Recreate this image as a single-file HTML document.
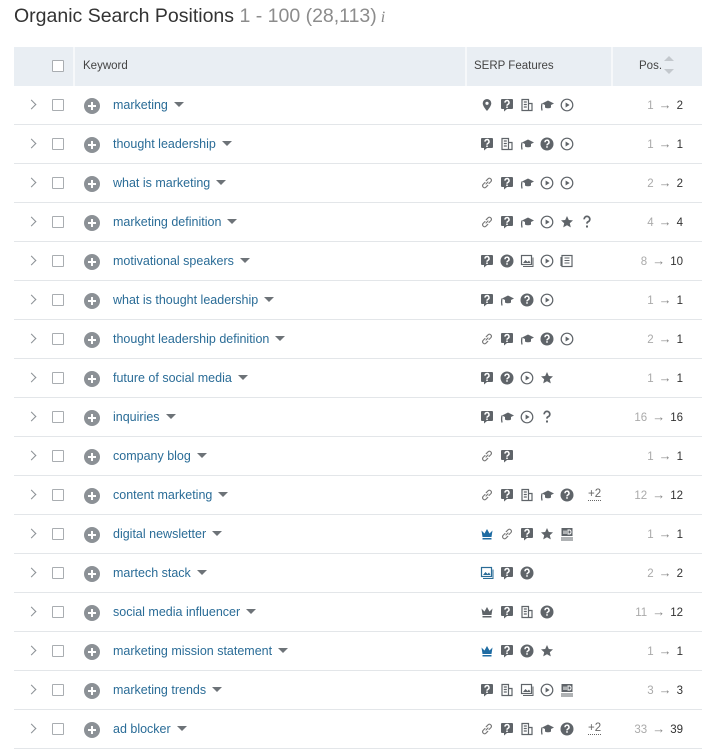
<!DOCTYPE html>
<html><head><meta charset="utf-8">
<style>
*{margin:0;padding:0;box-sizing:border-box}
body{width:702px;height:748px;overflow:hidden;background:#fff;font-family:"Liberation Sans",sans-serif;position:relative}
.title{position:absolute;left:14px;top:5px;font-size:19.5px;color:#333;white-space:nowrap}
.title .g{color:#8c8c8c}
.title .i{font-family:"Liberation Serif",serif;font-style:italic;font-size:16px;color:#888;margin-left:4px}
.hdr{position:absolute;left:14px;top:47px;width:688px;height:39px;background:#e9eef3;font-size:11.5px;color:#444}
.hdr .d{position:absolute;top:0;width:2px;height:39px;background:#f6f8fa}
.cb{position:absolute;width:12px;height:12px;border:1px solid #a9adb1;background:#fff;border-radius:1px}
.row{position:absolute;left:14px;width:688px;height:39px;border-bottom:1px solid #e3e6e9}
.chev{position:absolute;left:14px;top:15px;width:7px;height:7px;border-right:1.5px solid #8b9095;border-top:1.5px solid #8b9095;transform:rotate(45deg)}
.plus{position:absolute;left:70px;top:12px;width:16px;height:16px;border-radius:50%;background:#8c9196}
.plus:before,.plus:after{content:"";position:absolute;background:#fff;left:7px;top:4px;width:2px;height:8px}
.plus:after{left:4px;top:7px;width:8px;height:2px}
.kw{position:absolute;left:99px;top:12px;font-size:12.5px;color:#2a6c97;white-space:nowrap}
.kw:after{content:"";display:inline-block;margin-left:6px;border-left:5px solid transparent;border-right:5px solid transparent;border-top:5px solid #6d7378;vertical-align:2px}
.ic{position:absolute;top:12px;left:466px;height:14px;white-space:nowrap}
.ic svg{width:14px;height:14px;margin-right:6px;vertical-align:top}
.ic .more{font-size:11.5px;color:#666;border-bottom:1px dotted #666;margin-left:8px;vertical-align:top;line-height:13px}
.pos{position:absolute;right:19px;top:13px;font-size:11.5px;color:#333;white-space:nowrap}
.pos .o{color:#aaa}
.pos .a{color:#888;margin:0 5px;font-size:13px;line-height:11px}
</style></head><body>
<svg width="0" height="0" style="position:absolute">
<defs>
<symbol id="q" viewBox="0 0 14 14"><path d="M2 1h10a1 1 0 0 1 1 1v8a1 1 0 0 1-1 1H7l-3 2.5V11H2a1 1 0 0 1-1-1V2a1 1 0 0 1 1-1z" fill="#5f6469"/><path d="M5 4.6a2 2 0 1 1 2.8 1.8c-.7.3-.8.7-.8 1.4" stroke="#fff" stroke-width="1.5" fill="none"/><rect x="6.2" y="8.5" width="1.6" height="1.5" fill="#fff"/></symbol>
<symbol id="qc" viewBox="0 0 14 14"><circle cx="7" cy="7" r="6.5" fill="#5f6469"/><path d="M5 5.2a2 2 0 1 1 2.8 1.8c-.7.3-.8.7-.8 1.4" stroke="#fff" stroke-width="1.5" fill="none"/><rect x="6.2" y="9.2" width="1.6" height="1.5" fill="#fff"/></symbol>
<symbol id="pin" viewBox="0 0 14 14"><path d="M7 1a4.3 4.3 0 0 1 4.3 4.3C11.3 8.5 7 13 7 13S2.7 8.5 2.7 5.3A4.3 4.3 0 0 1 7 1z" fill="#5f6469"/><circle cx="7" cy="5.3" r="1.6" fill="#fff"/></symbol>
<symbol id="doc" viewBox="0 0 14 14"><path d="M2 1.5h6.5v11H2zM8.5 5.5h3.5v7H8.5M3.8 4h3M3.8 6.5h3M3.8 9h3" stroke="#5f6469" stroke-width="1.2" fill="none"/></symbol>
<symbol id="cap" viewBox="0 0 14 14"><path d="M2 5.5l6-3 6 3-6 3z" fill="#5f6469"/><path d="M5 7v2.5c1.5 1 4.5 1 6 0V7" fill="#5f6469"/><path d="M2 5.5c-.5 2-.5 4.5 0 7" stroke="#5f6469" stroke-width="1.3" fill="none"/></symbol>
<symbol id="play" viewBox="0 0 14 14"><circle cx="7" cy="7" r="5.8" stroke="#5f6469" stroke-width="1.2" fill="none"/><path d="M5.6 4.5v5l4-2.5z" fill="#5f6469"/></symbol>
<symbol id="link" viewBox="0 0 14 14"><path d="M6 8l2-2M5 6.5L3 8.5a2 2 0 0 0 2.8 2.8L7.8 9.3M9 7.5l2-2A2 2 0 0 0 8.2 2.7L6.2 4.7" stroke="#777" stroke-width="1.1" fill="none" stroke-linecap="round"/></symbol>
<symbol id="star" viewBox="0 0 14 14"><path d="M7 1l1.8 4 4.2.4-3.2 2.8 1 4.2L7 10.2 3.2 12.4l1-4.2L1 5.4 5.2 5z" fill="#5f6469"/></symbol>
<symbol id="qm" viewBox="0 0 14 14"><path d="M4.2 4.3a2.8 2.8 0 1 1 3.8 2.5c-.8.4-1 .9-1 1.8" stroke="#5f6469" stroke-width="1.8" fill="none"/><rect x="6" y="10.5" width="2" height="2" fill="#5f6469"/></symbol>
<symbol id="img" viewBox="0 0 14 14"><rect x="1.5" y="1.5" width="10" height="9" stroke="#5f6469" stroke-width="1.2" fill="none"/><path d="M3 9l2.5-3 2 2 1.5-1.5L10.5 9z" fill="#5f6469"/><path d="M3 12.5h10V3.5" stroke="#5f6469" stroke-width="1" fill="none"/></symbol>
<symbol id="imgb" viewBox="0 0 14 14"><rect x="1.5" y="1.5" width="10" height="9" stroke="#2a6c97" stroke-width="1.2" fill="none"/><path d="M3 9l2.5-3 2 2 1.5-1.5L10.5 9z" fill="#2a6c97"/><path d="M3 12.5h10V3.5" stroke="#2a6c97" stroke-width="1" fill="none"/></symbol>
<symbol id="news" viewBox="0 0 14 14"><rect x="2" y="1.5" width="10" height="11" stroke="#5f6469" stroke-width="1.2" fill="none"/><path d="M4.5 4h5M4.5 6.5h5M4.5 9h5M1 3v9" stroke="#5f6469" stroke-width="1.1"/></symbol>
<symbol id="crown" viewBox="0 0 14 14"><path d="M1.5 3.5l3 3L7 2l2.5 4.5 3-3-1 6.5h-9z" fill="currentColor"/><rect x="2.5" y="11" width="9" height="1.5" fill="currentColor"/></symbol>
<symbol id="ad" viewBox="0 0 14 14"><rect x="1.5" y="1" width="11" height="8" fill="#5f6469"/><path d="M4 7V3.5M6 7V3.5M8 3h1.5c1 0 1.5.5 1.5 2s-.5 2-1.5 2H8z" stroke="#fff" stroke-width="1" fill="none"/><path d="M1 11h12M1 13h12" stroke="#5f6469" stroke-width="1"/></symbol>
</defs></svg>

<div class="title">Organic Search Positions <span class="g">1 - 100 (28,113)</span><span class="i">i</span></div>

<div class="hdr">
  <div class="cb" style="left:38px;top:13px"></div>
  <div class="d" style="left:59px"></div>
  <div style="position:absolute;left:69px;top:13px">Keyword</div>
  <div class="d" style="left:451px"></div>
  <div style="position:absolute;left:460px;top:13px">SERP Features</div>
  <div class="d" style="left:597px"></div>
  <div style="position:absolute;left:625px;top:13px">Pos.</div>
  <div style="position:absolute;left:650px;top:9px;border-left:5px solid transparent;border-right:5px solid transparent;border-bottom:5px solid #c3c8cd"></div>
  <div style="position:absolute;left:650px;top:22px;border-left:5px solid transparent;border-right:5px solid transparent;border-top:5px solid #c3c8cd"></div>
</div>

<div class="row" style="top:86px"><div class="chev"></div><div class="cb" style="left:38px;top:13px"></div><div class="plus"></div><div class="kw">marketing</div>
<div class="ic"><svg><use href="#pin"/></svg><svg><use href="#q"/></svg><svg><use href="#doc"/></svg><svg><use href="#cap"/></svg><svg><use href="#play"/></svg></div>
<div class="pos"><span class="o">1</span><span class="a">→</span>2</div></div>

<div class="row" style="top:125px"><div class="chev"></div><div class="cb" style="left:38px;top:13px"></div><div class="plus"></div><div class="kw">thought leadership</div>
<div class="ic"><svg><use href="#q"/></svg><svg><use href="#doc"/></svg><svg><use href="#cap"/></svg><svg><use href="#qc"/></svg><svg><use href="#play"/></svg></div>
<div class="pos"><span class="o">1</span><span class="a">→</span>1</div></div>

<div class="row" style="top:164px"><div class="chev"></div><div class="cb" style="left:38px;top:13px"></div><div class="plus"></div><div class="kw">what is marketing</div>
<div class="ic"><svg><use href="#link"/></svg><svg><use href="#q"/></svg><svg><use href="#cap"/></svg><svg><use href="#play"/></svg><svg><use href="#play"/></svg></div>
<div class="pos"><span class="o">2</span><span class="a">→</span>2</div></div>

<div class="row" style="top:203px"><div class="chev"></div><div class="cb" style="left:38px;top:13px"></div><div class="plus"></div><div class="kw">marketing definition</div>
<div class="ic"><svg><use href="#link"/></svg><svg><use href="#q"/></svg><svg><use href="#cap"/></svg><svg><use href="#play"/></svg><svg><use href="#star"/></svg><svg><use href="#qm"/></svg></div>
<div class="pos"><span class="o">4</span><span class="a">→</span>4</div></div>

<div class="row" style="top:242px"><div class="chev"></div><div class="cb" style="left:38px;top:13px"></div><div class="plus"></div><div class="kw">motivational speakers</div>
<div class="ic"><svg><use href="#q"/></svg><svg><use href="#qc"/></svg><svg><use href="#img"/></svg><svg><use href="#play"/></svg><svg><use href="#news"/></svg></div>
<div class="pos"><span class="o">8</span><span class="a">→</span>10</div></div>

<div class="row" style="top:281px"><div class="chev"></div><div class="cb" style="left:38px;top:13px"></div><div class="plus"></div><div class="kw">what is thought leadership</div>
<div class="ic"><svg><use href="#q"/></svg><svg><use href="#cap"/></svg><svg><use href="#qc"/></svg><svg><use href="#play"/></svg></div>
<div class="pos"><span class="o">1</span><span class="a">→</span>1</div></div>

<div class="row" style="top:320px"><div class="chev"></div><div class="cb" style="left:38px;top:13px"></div><div class="plus"></div><div class="kw">thought leadership definition</div>
<div class="ic"><svg><use href="#link"/></svg><svg><use href="#q"/></svg><svg><use href="#cap"/></svg><svg><use href="#qc"/></svg><svg><use href="#play"/></svg></div>
<div class="pos"><span class="o">2</span><span class="a">→</span>1</div></div>

<div class="row" style="top:359px"><div class="chev"></div><div class="cb" style="left:38px;top:13px"></div><div class="plus"></div><div class="kw">future of social media</div>
<div class="ic"><svg><use href="#q"/></svg><svg><use href="#qc"/></svg><svg><use href="#play"/></svg><svg><use href="#star"/></svg></div>
<div class="pos"><span class="o">1</span><span class="a">→</span>1</div></div>

<div class="row" style="top:398px"><div class="chev"></div><div class="cb" style="left:38px;top:13px"></div><div class="plus"></div><div class="kw">inquiries</div>
<div class="ic"><svg><use href="#q"/></svg><svg><use href="#cap"/></svg><svg><use href="#play"/></svg><svg><use href="#qm"/></svg></div>
<div class="pos"><span class="o">16</span><span class="a">→</span>16</div></div>

<div class="row" style="top:437px"><div class="chev"></div><div class="cb" style="left:38px;top:13px"></div><div class="plus"></div><div class="kw">company blog</div>
<div class="ic"><svg><use href="#link"/></svg><svg><use href="#q"/></svg></div>
<div class="pos"><span class="o">1</span><span class="a">→</span>1</div></div>

<div class="row" style="top:476px"><div class="chev"></div><div class="cb" style="left:38px;top:13px"></div><div class="plus"></div><div class="kw">content marketing</div>
<div class="ic"><svg><use href="#link"/></svg><svg><use href="#q"/></svg><svg><use href="#doc"/></svg><svg><use href="#cap"/></svg><svg><use href="#qc"/></svg><span class="more">+2</span></div>
<div class="pos"><span class="o">12</span><span class="a">→</span>12</div></div>

<div class="row" style="top:515px"><div class="chev"></div><div class="cb" style="left:38px;top:13px"></div><div class="plus"></div><div class="kw">digital newsletter</div>
<div class="ic"><svg style="color:#1f6ca3"><use href="#crown"/></svg><svg><use href="#link"/></svg><svg><use href="#q"/></svg><svg><use href="#star"/></svg><svg><use href="#ad"/></svg></div>
<div class="pos"><span class="o">1</span><span class="a">→</span>1</div></div>

<div class="row" style="top:554px"><div class="chev"></div><div class="cb" style="left:38px;top:13px"></div><div class="plus"></div><div class="kw">martech stack</div>
<div class="ic"><svg><use href="#imgb"/></svg><svg><use href="#q"/></svg><svg><use href="#qc"/></svg></div>
<div class="pos"><span class="o">2</span><span class="a">→</span>2</div></div>

<div class="row" style="top:593px"><div class="chev"></div><div class="cb" style="left:38px;top:13px"></div><div class="plus"></div><div class="kw">social media influencer</div>
<div class="ic"><svg style="color:#5f6469"><use href="#crown"/></svg><svg><use href="#q"/></svg><svg><use href="#doc"/></svg><svg><use href="#qc"/></svg></div>
<div class="pos"><span class="o">11</span><span class="a">→</span>12</div></div>

<div class="row" style="top:632px"><div class="chev"></div><div class="cb" style="left:38px;top:13px"></div><div class="plus"></div><div class="kw">marketing mission statement</div>
<div class="ic"><svg style="color:#1f6ca3"><use href="#crown"/></svg><svg><use href="#q"/></svg><svg><use href="#qc"/></svg><svg><use href="#star"/></svg></div>
<div class="pos"><span class="o">1</span><span class="a">→</span>1</div></div>

<div class="row" style="top:671px"><div class="chev"></div><div class="cb" style="left:38px;top:13px"></div><div class="plus"></div><div class="kw">marketing trends</div>
<div class="ic"><svg><use href="#q"/></svg><svg><use href="#doc"/></svg><svg><use href="#img"/></svg><svg><use href="#play"/></svg><svg><use href="#ad"/></svg></div>
<div class="pos"><span class="o">3</span><span class="a">→</span>3</div></div>

<div class="row" style="top:710px"><div class="chev"></div><div class="cb" style="left:38px;top:13px"></div><div class="plus"></div><div class="kw">ad blocker</div>
<div class="ic"><svg><use href="#link"/></svg><svg><use href="#q"/></svg><svg><use href="#doc"/></svg><svg><use href="#cap"/></svg><svg><use href="#qc"/></svg><span class="more">+2</span></div>
<div class="pos"><span class="o">33</span><span class="a">→</span>39</div></div>

</body></html>
